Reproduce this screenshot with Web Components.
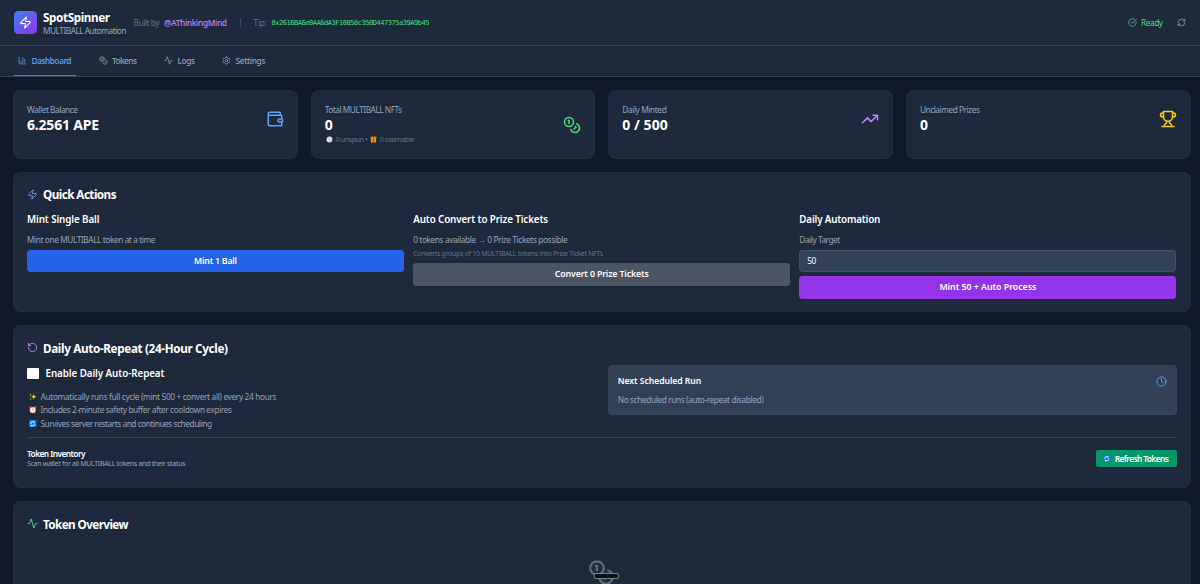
<!DOCTYPE html>
<html lang="en">
<head>
<meta charset="utf-8">
<title>SpotSpinner</title>
<style>
html,body{margin:0;height:584px;overflow:hidden;background:#0f172a}
body{font-family:"Noto Sans","Open Sans",sans-serif;font-size:8px;color:#fff}
</style>
</head>
<body>
<spot-app></spot-app>
<script>
const define = (name, html, init) => customElements.define(name, class extends HTMLElement {
  connectedCallback() {
    if (this.shadowRoot) return;
    this.attachShadow({ mode: 'open' }).innerHTML = typeof html === 'function' ? html(this) : html;
    if (init) init(this);
  }
});

/* Stroke icons on a 24-unit grid */
const ICONS = {
  zap: '<path d="M4 14a1 1 0 0 1-.78-1.63l9.9-10.2a.5.5 0 0 1 .86.46l-1.92 6.02A1 1 0 0 0 13 10h7a1 1 0 0 1 .78 1.63l-9.9 10.2a.5.5 0 0 1-.86-.46l1.92-6.02A1 1 0 0 0 11 14z"/>',
  chart: '<path d="M3 3v16a2 2 0 0 0 2 2h16M18 17V9M13 17V5M8 17v-3"/>',
  coins: '<circle cx="8" cy="8" r="6"/><path d="M18.09 10.37A6 6 0 1 1 10.34 18M7 6h1v4M16.71 13.88l.7.71-2.82 2.82"/>',
  activity: '<path d="M22 12h-2.48a2 2 0 0 0-1.93 1.46l-2.35 8.36a.25.25 0 0 1-.48 0L9.24 2.18a.25.25 0 0 0-.48 0l-2.35 8.36A2 2 0 0 1 4.49 12H2"/>',
  gear: '<path d="M12.22 2h-.44a2 2 0 0 0-2 2v.18a2 2 0 0 1-1 1.73l-.43.25a2 2 0 0 1-2 0l-.15-.08a2 2 0 0 0-2.73.73l-.22.38a2 2 0 0 0 .73 2.73l.15.1a2 2 0 0 1 1 1.72v.51a2 2 0 0 1-1 1.74l-.15.09a2 2 0 0 0-.73 2.73l.22.38a2 2 0 0 0 2.73.73l.15-.08a2 2 0 0 1 2 0l.43.25a2 2 0 0 1 1 1.73V20a2 2 0 0 0 2 2h.44a2 2 0 0 0 2-2v-.18a2 2 0 0 1 1-1.73l.43-.25a2 2 0 0 1 2 0l.15.08a2 2 0 0 0 2.73-.73l.22-.39a2 2 0 0 0-.73-2.73l-.15-.08a2 2 0 0 1-1-1.74v-.5a2 2 0 0 1 1-1.74l.15-.09a2 2 0 0 0 .73-2.73l-.22-.38a2 2 0 0 0-2.73-.73l-.15.08a2 2 0 0 1-2 0l-.43-.25a2 2 0 0 1-1-1.73V4a2 2 0 0 0-2-2z"/><circle cx="12" cy="12" r="3"/>',
  check: '<path d="M21.8 10A10 10 0 1 1 17 3.34M9 11l3 3L22 4"/>',
  refresh: '<path d="M3 12a9 9 0 0 1 9-9 9.75 9.75 0 0 1 6.74 2.74L21 8M21 3v5h-5M21 12a9 9 0 0 1-9 9 9.75 9.75 0 0 1-6.74-2.74L3 16M8 16H3v5"/>',
  wallet: '<path d="M19 7V4a1 1 0 0 0-1-1H5a2 2 0 0 0 0 4h15a1 1 0 0 1 1 1v4h-3a2 2 0 0 0 0 4h3a1 1 0 0 0 1-1v-2a1 1 0 0 0-1-1M3 5v14a2 2 0 0 0 2 2h15a1 1 0 0 0 1-1v-4"/>',
  trend: '<path d="M22 7l-8.5 8.5-5-5L2 17M16 7h6v6"/>',
  trophy: '<path d="M6 9H4.5a2.5 2.5 0 0 1 0-5H6M18 9h1.5a2.5 2.5 0 0 0 0-5H18M4 22h16M10 14.66V17c0 .55-.47.98-.97 1.21C7.85 18.75 7 20.24 7 22M14 14.66V17c0 .55.47.98.97 1.21C16.15 18.75 17 20.24 17 22M18 2H6v7a6 6 0 0 0 12 0V2Z"/>',
  rotate: '<path d="M3 12a9 9 0 1 0 9-9 9.75 9.75 0 0 0-6.74 2.74L3 8M3 3v5h5"/>',
  clock: '<circle cx="12" cy="12" r="10"/><path d="M12 6v6l4 2"/>'
};
/* Small filled pictures */
const PICS = {
  ball: '<circle cx="12" cy="12" r="10" fill="#e4e4e7"/><path d="M20 8a10 10 0 0 1-12 13c6 0 11-5 12-13z" fill="#a3a3ad"/><path d="M9 6l4 2M7 11l4 1M12 13l3-2" stroke="#a1a1aa" stroke-width="2"/>',
  gift: '<path d="M3 4h18v18H3z" fill="#f59e0b"/><path d="M2 3h20v5H2z" fill="#ff8c1a"/><path d="M10 3h4v19h-4z" fill="#c2410c"/><path d="M7 1l5 3 5-3v3H7z" fill="#fbbf24"/>',
  sparkle: '<path d="M15 3l2.2 6.8L24 12l-6.8 2.2L15 21l-2.200-6.800L6 12l6.800-2.200z" fill="#fde910"/><path d="M5 2l1 3 3 1-3 1-1 3-1-3-3-1 3-1zM5 15l1 3 3 1-3 1-1 3-1-3-3-1 3-1z" fill="#e5bd21"/>',
  alarm: '<circle cx="5" cy="5" r="4" fill="#e9573f"/><circle cx="19" cy="5" r="4" fill="#e9573f"/><path d="M4 23l4-5M20 23l-4-5" stroke="#d95040" stroke-width="3"/><circle cx="12" cy="13" r="10" fill="#e8907c"/><circle cx="12" cy="13" r="8" fill="#fff7ed"/><path d="M12 8v5h4" fill="none" stroke="#78716c" stroke-width="1.800"/>',
  cycle: '<rect width="24" height="24" rx="2" fill="#0a78e0"/><path d="M6 13V9q0-3 3-3h6M18 11v4q0 3-3 3H9" fill="none" stroke="#fff" stroke-width="2.600"/><path d="M14 2.500l5 3.500-5 3.500zM10 14.500L5 18l5 3.500z" fill="#fff"/>'
};
define('ui-icon', el => {
  const n = el.getAttribute('name'), s = el.getAttribute('size') || 9;
  return `<style>:host{display:block;flex:none;width:${s}px;height:${s}px}svg{display:block}</style>` +
  (PICS[n] ? `<svg width="${s}" height="${s}" viewBox="0 0 24 24">${PICS[n]}</svg>` :
  `<svg width="${s}" height="${s}" viewBox="0 0 24 24" fill="none" stroke="currentColor" stroke-width="2" stroke-linecap="round" stroke-linejoin="round">${ICONS[n]}</svg>`);
});

/* One line of text, tracked so that it spans its w attribute */
define('ui-text', '<style>:host{display:block;flex:none;white-space:nowrap}span{display:inline-block;white-space:pre}</style><span><slot></slot></span>', el => {
  const span = el.shadowRoot.querySelector('span');
  const w = parseFloat(el.getAttribute('w'));
  const n = el.textContent.length;
  if (!w || !n) return;
  const ls = (w - span.getBoundingClientRect().width) / (n - 1);
  span.style.letterSpacing = ls.toFixed(3) + 'px';
  span.style.marginRight = (-ls).toFixed(3) + 'px';
});

define('app-header', `<style>
:host{display:flex;align-items:center;height:45px;border-bottom:1px solid #334155;background:#1e293b;padding:0 14.500px 0 14px;box-sizing:content-box}
.logo{width:22.500px;height:22.500px;border-radius:4.500px;background:linear-gradient(135deg,#3b82f6,#9333ea);display:grid;place-items:center;margin-right:6.500px}
.name{width:90.500px;padding-top:2px}
.t{font-weight:700;font-size:11.700px;line-height:14px}
.s{font-size:8.300px;line-height:13px;color:#94a3b8}
.m{font-size:8.300px;line-height:12px;color:#64748b}
.sep{width:1px;height:9px;background:#3c4a5f;margin:0 12.500px 0 13px}
.mono{font:7px/12px "DejaVu Sans Mono",monospace;color:#4ade80;margin:0 0 0 4.500px}
.end{margin-left:auto;display:flex;align-items:center;color:#4ade80;font-size:8.300px;line-height:12px}
</style>
<div class="logo"><ui-icon name="zap" size="13"></ui-icon></div>
<div class="name"><ui-text class="t" w="67">SpotSpinner</ui-text><ui-text class="s" w="83.500">MULTIBALL Automation</ui-text></div>
<ui-text class="m" w="26">Built by</ui-text>
<ui-text class="m" w="63" style="color:#c084fc;font-weight:500;margin-left:4.500px">@AThinkingMind</ui-text>
<div class="sep"></div>
<ui-text class="m" w="13.500">Tip:</ui-text>
<ui-text class="mono" w="158">0x2616BA6e0AA6dA3F10858c350D447375a39A9b45</ui-text>
<div class="end"><ui-icon name="check"></ui-icon><ui-text w="22" style="margin:0 13.500px 0 4.500px">Ready</ui-text><ui-icon name="refresh" style="color:#94a3b8"></ui-icon></div>`);

define('nav-tab', el => `<style>
:host{display:flex;align-items:center;height:30px;padding:0 4.500px;color:#94a3b8;font-size:8.300px;line-height:12px;font-weight:500;box-sizing:border-box;border-bottom:1.500px solid transparent}
:host([active]){color:#60a5fa;border-color:#3b82f6}
ui-icon{margin-right:4.500px}
</style><ui-icon name="${el.getAttribute('icon')}"></ui-icon><ui-text w="${el.getAttribute('w')}">${el.getAttribute('label')}</ui-text>`);

define('app-nav', `<style>:host{display:flex;height:30px;gap:18px;padding:0 13.500px;background:#1e293b;border-bottom:1px solid #334155}</style>
<nav-tab active icon="chart" label="Dashboard" w="40"></nav-tab><nav-tab icon="coins" label="Tokens" w="25"></nav-tab><nav-tab icon="activity" label="Logs" w="17.500"></nav-tab><nav-tab icon="gear" label="Settings" w="30"></nav-tab>`);

define('stat-card', el => `<style>
:host{display:block;background:#1e293b;border:1px solid #202c3f;border-radius:7px;padding:13px;height:69px;box-sizing:border-box}
.row{display:flex;align-items:center;justify-content:space-between}
.l{font-size:8.300px;line-height:12px;color:#94a3b8}
.v{font-size:14px;line-height:18px;font-weight:700}
</style><div class="row"><div><ui-text class="l" w="${el.getAttribute('lw')}">${el.getAttribute('label')}</ui-text><ui-text class="v" w="${el.getAttribute('vw')}">${el.getAttribute('value')}</ui-text><slot></slot></div>
<ui-icon name="${el.getAttribute('icon')}" size="18" style="color:${el.getAttribute('tint')}"></ui-icon></div>`);

define('ui-panel', el => `<style>
:host{display:block;background:#1e293b;border:1px solid #202c3f;border-radius:7px;padding:13px;box-sizing:border-box}
.h{display:flex;align-items:center;height:17px;gap:5px;font-size:11.700px;font-weight:700}
</style><div class="h"><ui-icon name="${el.getAttribute('icon')}" size="11" style="color:${el.getAttribute('tint')}"></ui-icon><ui-text w="${el.getAttribute('w')}">${el.getAttribute('heading')}</ui-text></div><slot></slot>`);

define('ui-button', `<style>
:host{display:flex;align-items:center;justify-content:center;height:22.500px;border-radius:3.500px;font-size:8.800px;line-height:12px;font-weight:600;background:var(--bg)}
</style><slot></slot>`);

define('spot-app', `<style>
:host{display:block;height:584px;overflow:hidden}
main{padding:12.500px 9.500px 0 13px;display:flex;flex-direction:column;gap:13px}
.cards{display:grid;grid-template-columns:repeat(4,1fr);gap:13px}
.sub{display:flex;align-items:center;font-size:7px;line-height:12px;color:#64748b}
.three{display:grid;grid-template-columns:repeat(3,1fr);gap:9px;margin-top:10px}
.h3{font-size:9.800px;line-height:14px;font-weight:600;margin-bottom:6.500px}
.p{font-size:8.300px;line-height:13px;color:#94a3b8}
.xs{font-size:7px;line-height:9px;color:#64748b;margin:3px 0 5px}
.input{height:22.500px;box-sizing:border-box;border:1px solid #435065;border-radius:3.500px;background:#334155;display:flex;align-items:center;padding:0 7px;font-size:8.300px;margin:3.500px 0 4px}
.two{display:grid;grid-template-columns:1fr 1fr;gap:13px;margin-top:8.500px;height:72.500px;align-items:start}
.en{display:flex;align-items:center;gap:7px;font-size:9.800px;line-height:18px;font-weight:600;margin-bottom:7px}
.box{width:11.500px;height:11.500px;background:#fff;border-radius:1px}
.li{display:flex;align-items:center;gap:4px;padding-left:2px;font-size:8.300px;line-height:13.500px;color:#94a3b8}
.next{background:#334155;border:1px solid #374559;border-radius:4px;height:50px;box-sizing:border-box;padding:8.500px 8.500px}
.nh{display:flex;justify-content:space-between;align-items:center;font-size:8.600px;line-height:14px;font-weight:600;margin-bottom:5px}
.inv{display:flex;justify-content:space-between;align-items:center;border-top:1px solid #334155;padding-top:10.500px}
.overview{height:100px}
.empty{display:flex;justify-content:center;position:relative;color:#5f6b7d;margin-top:26.500px}
.pill{position:absolute;left:567px;top:14px;width:25px;height:6px;box-sizing:border-box;background:#0b0e13;border:1px solid #7b838f;border-radius:2px}
</style>
<app-header></app-header><app-nav></app-nav>
<main>
<div class="cards">
<stat-card label="Wallet Balance" lw="51" value="6.2561 APE" vw="72" icon="wallet" tint="#60a5fa"></stat-card>
<stat-card label="Total MULTIBALL NFTs" lw="77.500" value="0" icon="coins" tint="#4ade80"><div class="sub"><ui-icon name="ball" size="7" style="margin:0 3px 0 1px"></ui-icon><ui-text w="32">0 unspun •</ui-text><ui-icon name="gift" size="7" style="margin:0 2.500px 0 2.500px"></ui-icon><ui-text w="34.500">0 claimable</ui-text></div></stat-card>
<stat-card label="Daily Minted" lw="44.500" value="0 / 500" vw="45.500" icon="trend" tint="#c084fc"></stat-card>
<stat-card label="Unclaimed Prizes" lw="60" value="0" icon="trophy" tint="#facc15"></stat-card>
</div>
<ui-panel icon="zap" tint="#60a5fa" heading="Quick Actions" w="73.500" style="height:140.500px">
<div class="three">
<div><ui-text class="h3" w="72.500">Mint Single Ball</ui-text><ui-text class="p" w="128.500">Mint one MULTIBALL token at a time</ui-text><ui-button style="--bg:#2563eb;margin-top:3.500px"><ui-text w="43">Mint 1 Ball</ui-text></ui-button></div>
<div><ui-text class="h3" w="135">Auto Convert to Prize Tickets</ui-text><ui-text class="p" w="154.500">0 tokens available → 0 Prize Tickets possible</ui-text><ui-text class="xs" w="190">Converts groups of 10 MULTIBALL tokens into Prize Ticket NFTs</ui-text><ui-button style="--bg:#4b5563"><ui-text w="94">Convert 0 Prize Tickets</ui-text></ui-button></div>
<div><ui-text class="h3" w="81">Daily Automation</ui-text><ui-text class="p" w="41">Daily Target</ui-text><div class="input"><ui-text w="9">50</ui-text></div><ui-button style="--bg:#9333ea"><ui-text w="97">Mint 50 + Auto Process</ui-text></ui-button></div>
</div></ui-panel>
<ui-panel icon="rotate" tint="#c084fc" heading="Daily Auto-Repeat (24-Hour Cycle)" w="185" style="height:163px">
<div class="two">
<div><div class="en"><div class="box"></div><ui-text w="119">Enable Daily Auto-Repeat</ui-text></div>
<div class="li"><ui-icon name="sparkle" size="7.500"></ui-icon><ui-text w="236">Automatically runs full cycle (mint 500 + convert all) every 24 hours</ui-text></div>
<div class="li"><ui-icon name="alarm" size="7.500"></ui-icon><ui-text w="191.500">Includes 2-minute safety buffer after cooldown expires</ui-text></div>
<div class="li"><ui-icon name="cycle" size="7.500"></ui-icon><ui-text w="171.500">Survives server restarts and continues scheduling</ui-text></div></div>
<div class="next"><div class="nh"><ui-text w="83.500">Next Scheduled Run</ui-text><ui-icon name="clock" size="11" style="color:#60a5fa"></ui-icon></div><ui-text class="p" w="146">No scheduled runs (auto-repeat disabled)</ui-text></div>
</div>
<div class="inv"><div><ui-text w="58.500" style="font-size:8.300px;font-weight:600;line-height:10px">Token Inventory</ui-text><ui-text w="158.500" style="font-size:7px;line-height:10px;color:#94a3b8">Scan wallet for all MULTIBALL tokens and their status</ui-text></div>
<ui-button style="--bg:#059669;height:17px;width:81px;border-radius:2px;font-size:8.300px;font-weight:600;gap:4px"><ui-icon name="cycle" size="7.500"></ui-icon><ui-text w="54">Refresh Tokens</ui-text></ui-button></div>
</ui-panel>
<ui-panel class="overview" icon="activity" tint="#4ade80" heading="Token Overview" w="85.500">
<div class="empty"><ui-icon name="coins" size="27"></ui-icon><div class="pill"></div></div></ui-panel>
</main>`);
</script>
</body>
</html>
